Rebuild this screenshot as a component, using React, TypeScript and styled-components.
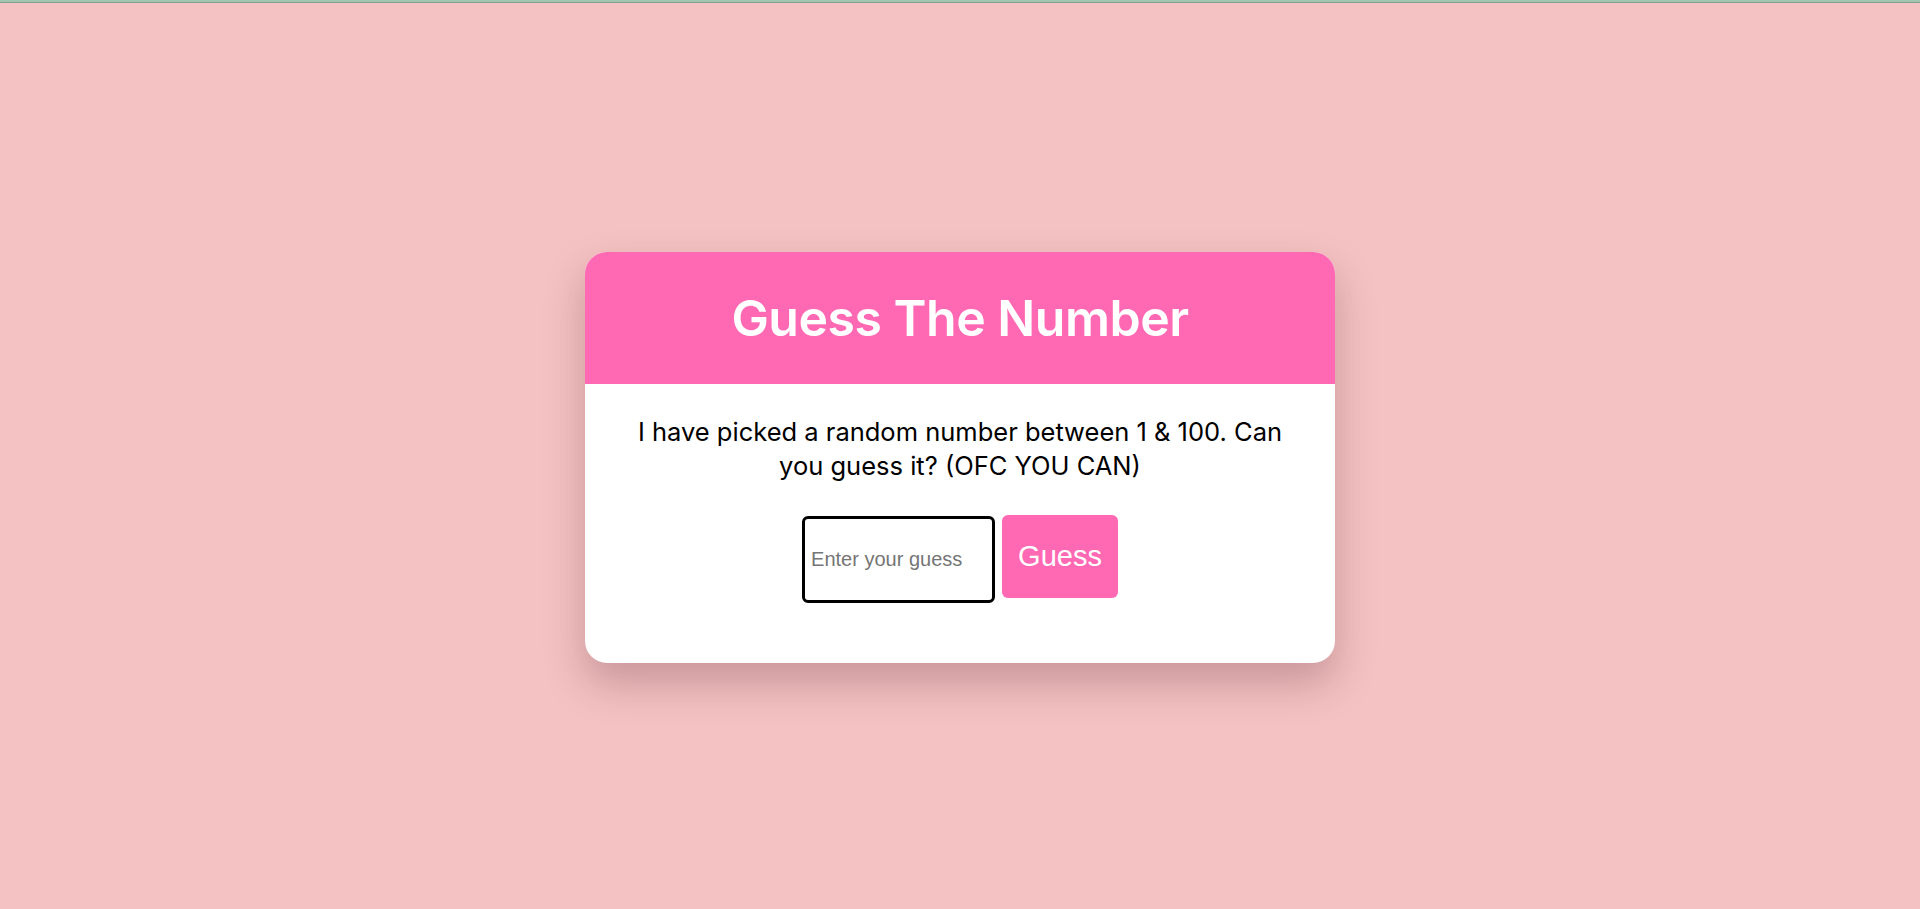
import React, { useState } from "react";
import styled, { createGlobalStyle } from "styled-components";

const GlobalStyle = createGlobalStyle`
  * {
    box-sizing: border-box;
  }

  body {
    margin: 0;
    background: #f4c2c2;
    font-family: Inter, "Noto Sans", sans-serif;
  }
`;

const Page = styled.div`
  min-height: 100vh;
  display: flex;
  flex-direction: column;
`;

const TopStripe = styled.div`
  height: 3px;
  background: #a3c4ae;
  border-bottom: 1px solid #7fa08c;
`;

const Main = styled.main`
  flex: 1;
  display: flex;
  align-items: center;
  justify-content: center;
  padding-top: 2px;
`;

const Card = styled.div`
  width: 750px;
  background: #ffffff;
  border-radius: 22px;
  overflow: hidden;
  box-shadow: 0 20px 40px rgba(70, 20, 30, 0.25);
  padding-bottom: 60px;
`;

const Header = styled.header`
  background: #ff69b4;
  height: 132px;
  display: flex;
  align-items: center;
  justify-content: center;
`;

const Title = styled.h1`
  margin: 0;
  color: #ffffff;
  font-size: 50px;
  font-weight: 600;
  letter-spacing: -0.5px;
`;

const Intro = styled.p`
  margin: 31px auto 32px;
  width: 680px;
  text-align: center;
  font-size: 25.5px;
  line-height: 34px;
  color: #000000;
`;

const GuessRow = styled.form`
  display: flex;
  justify-content: center;
  align-items: flex-start;
  gap: 7px;
`;

const GuessInput = styled.input`
  width: 193px;
  height: 87px;
  margin-top: 1px;
  padding: 0 6px;
  border: 3px solid #000000;
  border-radius: 6px;
  font-family: "Liberation Sans", Arial, sans-serif;
  font-size: 20px;
  outline: none;

  &::placeholder {
    color: #757575;
  }
`;

const GuessButton = styled.button`
  height: 83px;
  padding: 0 16px;
  border: none;
  border-radius: 6px;
  background: #ff69b4;
  color: #ffffff;
  font-family: "Liberation Sans", Arial, sans-serif;
  font-size: 29px;
  cursor: pointer;
`;

export default function App() {
  const [guess, setGuess] = useState("");

  return (
    <>
      <GlobalStyle />
      <Page>
        <TopStripe />
        <Main>
          <Card>
            <Header>
              <Title>Guess The Number</Title>
            </Header>
            <Intro>
              I have picked a random number between 1 &amp; 100. Can you guess
              it? (OFC YOU CAN)
            </Intro>
            <GuessRow onSubmit={(e) => e.preventDefault()}>
              <GuessInput
                type="number"
                placeholder="Enter your guess"
                value={guess}
                onChange={(e) => setGuess(e.target.value)}
              />
              <GuessButton type="submit">Guess</GuessButton>
            </GuessRow>
          </Card>
        </Main>
      </Page>
    </>
  );
}
